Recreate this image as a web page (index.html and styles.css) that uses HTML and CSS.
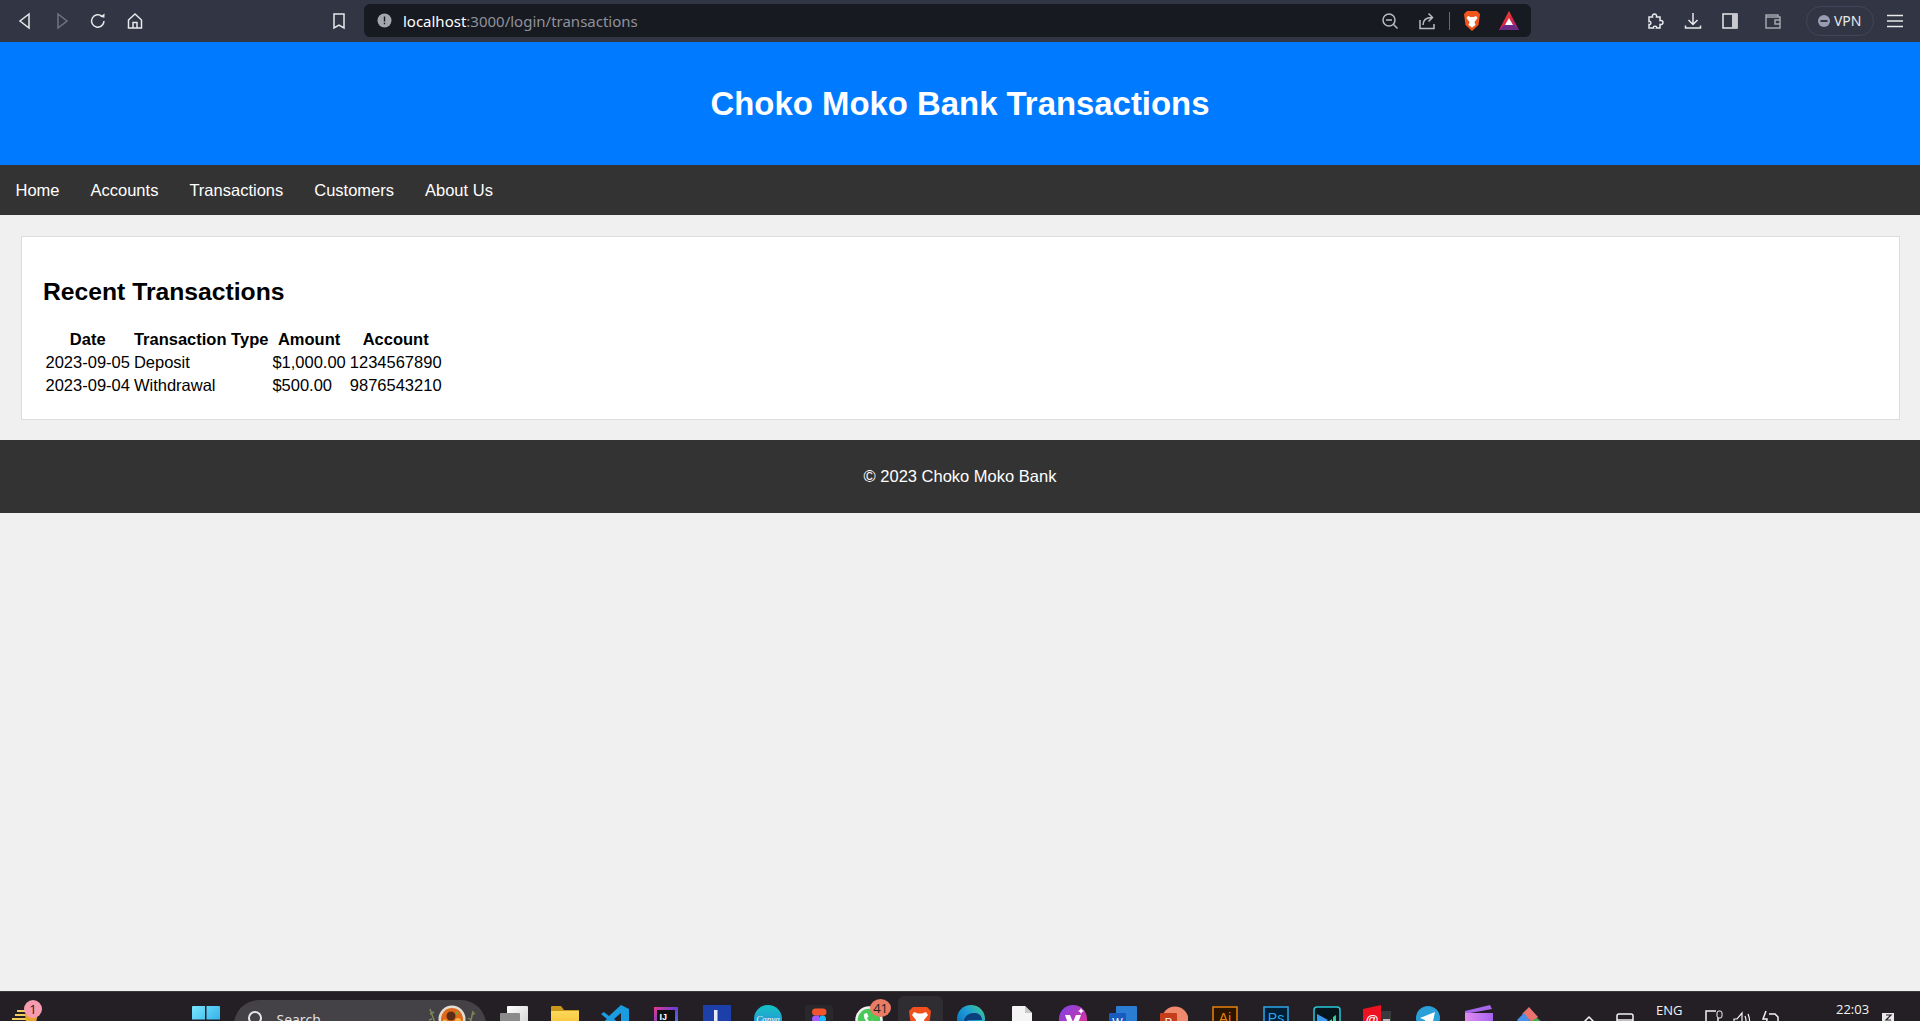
FILE: index.html
```html
<!DOCTYPE html>
<html lang="en">
<head>
<meta charset="utf-8">
<title>Choko Moko Bank Transactions</title>
<link rel="stylesheet" href="styles.css">
</head>
<body>
<svg class="defs" width="0" height="0" aria-hidden="true">
  <defs>
    <linearGradient id="g-win" x1="0" y1="0" x2="1" y2="1"><stop offset="0" stop-color="#78e6fc"/><stop offset="1" stop-color="#1f9fe6"/></linearGradient>
    <linearGradient id="g-folder" x1="0" y1="0" x2="0" y2="1"><stop offset="0" stop-color="#fdd85a"/><stop offset="1" stop-color="#f4b824"/></linearGradient>
    <linearGradient id="g-task" x1="0" y1="0" x2="1" y2="1"><stop offset="0" stop-color="#ffffff"/><stop offset="1" stop-color="#cfcfcf"/></linearGradient>
    <linearGradient id="g-ij" x1="0" y1="0" x2="1" y2="1"><stop offset="0" stop-color="#e8388a"/><stop offset=".5" stop-color="#6a3fd8"/><stop offset="1" stop-color="#2a9be8"/></linearGradient>
    <linearGradient id="g-canva" x1="0" y1="0" x2="0" y2="1"><stop offset="0" stop-color="#11c4c4"/><stop offset="1" stop-color="#3a7be0"/></linearGradient>
    <linearGradient id="g-edge" x1="0" y1="1" x2="1" y2="0"><stop offset="0" stop-color="#0b5fb0"/><stop offset=".55" stop-color="#1b9bd8"/><stop offset="1" stop-color="#45d08a"/></linearGradient>
    <linearGradient id="g-vy" x1="0" y1="0" x2="1" y2="1"><stop offset="0" stop-color="#7b45ea"/><stop offset="1" stop-color="#ee2f8c"/></linearGradient>
    <linearGradient id="g-clap" x1="0" y1="0" x2="1" y2="0"><stop offset="0" stop-color="#e28cf0"/><stop offset="1" stop-color="#a763ee"/></linearGradient>
    <linearGradient id="g-bat" x1="0" y1="0" x2="1" y2="1"><stop offset="0" stop-color="#f6701e"/><stop offset=".45" stop-color="#e6263f"/><stop offset="1" stop-color="#7a2a8c"/></linearGradient>
  </defs>
</svg>
<div class="page">
  <div class="toolbar">
    <div class="tool"><svg width="18" height="20" viewBox="0 0 18 20"><path class="ln" d="M13 3 4 10l9 7z"/></svg></div>
    <div class="tool dim"><svg width="18" height="20" viewBox="0 0 18 20"><path class="ln" d="M5 3l9 7-9 7z"/></svg></div>
    <div class="tool"><svg width="18" height="20" viewBox="0 0 18 20"><path class="ln" d="M15 10a6.200 6.200 0 1 1-2-4.600"/><path class="fl" d="M11 5.800l4.400 1 .2-4.400z"/></svg></div>
    <div class="tool"><svg width="18" height="20" viewBox="0 0 18 20"><path class="ln" d="M2.500 9 9 3l6.500 6v8h-13zM7 17v-5.500h4V17"/></svg></div>
    <div class="tool bookmark"><svg width="16" height="20" viewBox="0 0 16 20"><path class="ln" d="M3 3h10v14l-5-3-5 3z"/></svg></div>
    <div class="urlbar">
      <svg class="info" width="15" height="15" viewBox="0 0 15 15"><circle cx="7.500" cy="7.500" r="7" fill="#a5a7ae"/><path d="M6.800 3.500h1.400v5H6.800zM6.800 9.800h1.400v1.500H6.800z" fill="#181a21"/></svg>
      <span class="url"><span class="host">localhost</span>:3000/login/transactions</span>
      <div class="url-end">
        <svg class="end-ic" width="20" height="20" viewBox="0 0 20 20"><circle class="ln soft" cx="9" cy="9" r="6"/><path class="ln soft" d="M6 9h6M13.500 13.500l4 4"/></svg>
        <svg class="end-ic" width="20" height="20" viewBox="0 0 20 20"><path class="ln soft" d="M3 9v8.500h14V13M6 14c0-5 3-7.500 9-7.500M11.500 2.500l4 4-4 4"/></svg>
        <span class="divider"></span>
        <svg class="end-ic brave" width="18" height="22" viewBox="0 0 18 22"><path d="M4 1h10l3 3-1.500 11L9 21 2.500 15 1 4z" fill="#f1571d"/><path d="M5 6l2.500 1h3L13 6l1.500 2-3 4 1 3L9 17.500 5.500 15l1-3-3-4z" fill="#fff"/></svg>
        <svg class="end-ic tri" width="22" height="20" viewBox="0 0 22 20"><path d="M11 0 21 19H1z" fill="url(#g-bat)"/><path d="M1 19h20l-5-5H6z" fill="#6c2b87"/><path d="M11 7l4 7H7z" fill="#fff"/></svg>
      </div>
    </div>
    <div class="tool puzzle"><svg width="20" height="20" viewBox="0 0 20 20"><path class="ln" d="M3 6h3.500c-1-4 5-4 4 0H14v3.500c4-1 4 5 0 4V17h-3.500c1-2.500-4-2.500-3 0H3v-3.500c2.500 1 2.500-4 0-3z"/></svg></div>
    <div class="tool"><svg width="20" height="20" viewBox="0 0 20 20"><path class="ln" d="M10 2v11M5.500 9l4.500 4.500L14.500 9M2.500 14.500v2.500h15v-2.500"/></svg></div>
    <div class="tool"><svg width="20" height="20" viewBox="0 0 20 20"><rect class="ln" x="3" y="3" width="14" height="14"/><rect x="12" y="3" width="5" height="14" fill="#c9cad0"/></svg></div>
    <div class="tool wallet"><svg width="20" height="20" viewBox="0 0 20 20"><path class="ln dimln" d="M3 6V4h12v2M3 6h14v11H3zM17 9h-5v4h5"/></svg></div>
    <div class="vpn"><svg width="12" height="12" viewBox="0 0 12 12"><circle cx="6" cy="6" r="6" fill="#9a9cb4"/><rect x="2.500" y="5" width="7" height="2" fill="#323543"/></svg><span>VPN</span></div>
    <div class="tool burger"><svg width="18" height="16" viewBox="0 0 18 16"><path class="ln" d="M1 2.500h16M1 8h16M1 13.500h16"/></svg></div>
  </div>

  <header class="site-header"><h1>Choko Moko Bank Transactions</h1></header>
  <nav class="site-nav">
    <a href="#">Home</a><a href="#">Accounts</a><a href="#">Transactions</a><a href="#">Customers</a><a href="#">About Us</a>
  </nav>
  <main class="content">
    <section class="card">
      <h2>Recent Transactions</h2>
      <table>
        <thead><tr><th>Date</th><th>Transaction Type</th><th>Amount</th><th>Account</th></tr></thead>
        <tbody>
          <tr><td>2023-09-05</td><td>Deposit</td><td>$1,000.00</td><td>1234567890</td></tr>
          <tr><td>2023-09-04</td><td>Withdrawal</td><td>$500.00</td><td>9876543210</td></tr>
        </tbody>
      </table>
    </section>
  </main>
  <footer class="site-footer">© 2023 Choko Moko Bank</footer>
  <div class="spacer"></div>

  <div class="taskbar">
    <div class="weather"><svg width="28" height="30" viewBox="0 0 28 30"><path d="M5 19h8M3 23h11M0 27h14" stroke="#f0cc5e" stroke-width="2"/><path d="M13 22h13l-2 8H14z" fill="#e8a52c"/></svg><span class="badge pink">1</span></div>
    <div class="tb-icon win"><svg width="28" height="28" viewBox="0 0 28 28"><path d="M0 1a1 1 0 0 1 1-1h12v13.500H0zM14.500 0H27a1 1 0 0 1 1 1v12.500H14.500zM0 15h13.500v13H0zM14.500 15H28v13H14.500z" fill="url(#g-win)"/></svg></div>
    <div class="search">
      <svg width="20" height="20" viewBox="0 0 20 20"><circle cx="9" cy="9" r="6" fill="none" stroke="#e6e6e6" stroke-width="2"/><path d="M13 14l5 5" stroke="#e6e6e6" stroke-width="2"/></svg>
      <span class="search-text">Search</span>
      <svg class="food" width="50" height="30" viewBox="0 0 50 30"><path d="M3 4l5 14M3 9l4-2M5 14l-3 1M46 6l-3 14M45 10l3-2M44 15l-3-2" stroke="#7c8a52" stroke-width="1.500" fill="none"/><circle cx="25" cy="14" r="13.500" fill="#e4ddd2"/><circle cx="25" cy="14" r="11" fill="#e06a1c"/><circle cx="24" cy="11" r="4.500" fill="#5c2c16"/><circle cx="31" cy="16" r="3" fill="#f4b440"/><circle cx="18" cy="17" r="2.500" fill="#f4b440"/><circle cx="30" cy="8" r="1.500" fill="#6faa40"/></svg>
    </div>
    <div class="tb-icon"><svg width="28" height="28" viewBox="0 0 28 28"><rect x="7" width="21" height="24" rx="1" fill="url(#g-task)"/><rect y="7" width="20" height="21" rx="1" fill="#8b8b8b"/></svg></div>
    <div class="tb-icon"><svg width="28" height="28" viewBox="0 0 28 28"><path d="M0 1a1 1 0 0 1 1-1h9l3 4h15v24H0z" fill="#c9971a"/><path d="M0 5h28v23H0z" fill="url(#g-folder)"/></svg></div>
    <div class="tb-icon up"><svg width="28" height="28" viewBox="0 0 28 28"><path d="M20 0l8 4v20l-8 4L8 17l-5 4-3-2 6-5-6-5 3-2 5 4z" fill="#1c9ce0"/><path d="M20 8v12l-7-6z" fill="#231f25"/></svg></div>
    <div class="tb-icon down"><svg width="24" height="24" viewBox="0 0 24 24"><rect width="24" height="24" fill="url(#g-ij)"/><rect x="3" y="3" width="18" height="18" fill="#111"/><text class="ij" x="5.500" y="13">IJ</text></svg></div>
    <div class="tb-icon up"><svg width="28" height="28" viewBox="0 0 28 28"><rect width="28" height="28" fill="#1c3faa"/><rect x="11" y="5" width="3.500" height="18" fill="#e8ecf8"/></svg></div>
    <div class="tb-icon up"><svg width="28" height="28" viewBox="0 0 28 28"><circle cx="14" cy="14" r="14" fill="url(#g-canva)"/><text class="canva" x="14" y="17">Canva</text></svg></div>
    <div class="tb-icon figma"><svg width="28" height="28" viewBox="0 0 28 28"><rect width="28" height="28" rx="3" fill="#29282c"/><path d="M7 7a3.500 3.500 0 0 1 3.500-3.500H18a3.500 3.500 0 0 1 0 7h-7.500A3.500 3.500 0 0 1 7 7z" fill="#f2542d"/><path d="M7 14a3.500 3.500 0 0 1 3.500-3.500H14v7h-3.500A3.500 3.500 0 0 1 7 14z" fill="#a259ff"/><circle cx="17.500" cy="14" r="3.500" fill="#1abcfe"/></svg></div>
    <div class="tb-icon"><svg width="28" height="28" viewBox="0 0 28 28"><circle cx="14" cy="14" r="12.500" fill="#4ac959" stroke="#f0f0f0" stroke-width="2.500"/><path d="M9 8c-1 5 4 11 10 11l1.500-3-3.500-1.500-1.500 1.500c-2-1-3-2.500-3.500-4l1.500-1.500L12 7z" fill="#fff"/></svg><span class="badge coral">41</span></div>
    <div class="tb-icon active down"><svg width="24" height="28" viewBox="0 0 24 28"><path d="M5 0h14l4 4-2 16-9 8-9-8L1 4z" fill="#f1501d"/><path d="M6 5l4 1.500h4L18 5l2 3-4 5 1 4-5 3-5-3 1-4-4-5z" fill="#fff"/></svg></div>
    <div class="tb-icon up"><svg width="28" height="28" viewBox="0 0 28 28"><circle cx="14" cy="14" r="14" fill="url(#g-edge)"/><path d="M7 17c0-6 5-9 10-9s8 3 8 7H12c-3 0-4 3-2 6-2 0-3-2-3-4z" fill="#0a3f7c"/></svg></div>
    <div class="tb-icon"><svg width="20" height="28" viewBox="0 0 20 28"><path d="M0 1a1 1 0 0 1 1-1h12l7 7v21H0z" fill="#f4f4f4"/><path d="M13 0l7 7h-7z" fill="#c8c8c8"/></svg></div>
    <div class="tb-icon up"><svg width="28" height="28" viewBox="0 0 28 28"><circle cx="14" cy="14" r="14" fill="url(#g-vy)"/><path d="M6 10h5l3 7 3-7h5l-5 14h-6z" fill="#fff"/><path d="M22 3l1 2 2 1-2 1-1 2-1-2-2-1 2-1z" fill="#fff"/></svg></div>
    <div class="tb-icon"><svg width="28" height="28" viewBox="0 0 28 28"><rect x="7" width="21" height="28" rx="1" fill="#2b7cd3"/><rect y="7" width="17" height="17" rx="1" fill="#185abd"/><text class="ms" x="8.500" y="20">W</text></svg></div>
    <div class="tb-icon"><svg width="28" height="28" viewBox="0 0 28 28"><circle cx="15" cy="14" r="13.500" fill="#f08a6c"/><rect y="7" width="17" height="17" rx="1" fill="#c43e1c"/><text class="ms" x="8.500" y="20">P</text></svg></div>
    <div class="tb-icon"><svg width="26" height="26" viewBox="0 0 26 26"><rect x="1" y="1" width="24" height="24" fill="#2b1500" stroke="#e8820c" stroke-width="1.500"/><text class="adobe ai" x="13" y="17">Ai</text></svg></div>
    <div class="tb-icon"><svg width="26" height="26" viewBox="0 0 26 26"><rect x="1" y="1" width="24" height="24" fill="#001e36" stroke="#2da6e8" stroke-width="1.500"/><text class="adobe ps" x="13" y="17">Ps</text></svg></div>
    <div class="tb-icon"><svg width="28" height="28" viewBox="0 0 28 28"><rect x="1" y="1" width="26" height="26" rx="3" fill="#06161c" stroke="#27c7d8" stroke-width="1.500"/><path d="M4 8l11 6-11 8z" fill="#3a9bf0"/><path d="M16 15l3-2v9h-3zM20 11l3-2v13h-3z" fill="#2fd29a"/></svg></div>
    <div class="tb-icon up"><svg width="28" height="28" viewBox="0 0 28 28"><rect x="17" y="6" width="11" height="22" fill="#3a3a3c"/><rect x="20" y="14" width="7" height="3" fill="#bbb"/><path d="M0 4l18-4v28H0z" fill="#ee1122"/><text class="at" x="9" y="19">@</text></svg></div>
    <div class="tb-icon"><svg width="24" height="28" viewBox="0 0 24 28"><circle cx="12" cy="12" r="12" fill="#2a9fd8"/><path d="M4 12l15-6-3 14-4-4-2 3-1-5z" fill="#fff"/></svg></div>
    <div class="tb-icon up"><svg width="28" height="28" viewBox="0 0 28 28"><path d="M0 6l25-6 2 4L0 9z" fill="#a667ea"/><rect y="8" width="28" height="20" fill="url(#g-clap)"/></svg></div>
    <div class="tb-icon up"><svg width="28" height="28" viewBox="0 0 28 28"><path d="M14 4l13 13-9 9H9L1 17z" fill="#2b2b30"/><path d="M6 9l7-7 9 10-6 5z" fill="#e9716e"/><path d="M1 15l7-7 7 9-6 6z" fill="#4a8fe8"/><path d="M15 16l6-3 6 5-6 7z" fill="#4aa84e"/></svg></div>
    <div class="tray">
      <svg class="tray-chev" width="16" height="12" viewBox="0 0 16 12"><path d="M2 8l6-6 6 6" fill="none" stroke="#f2f2f2" stroke-width="1.500"/></svg>
      <svg class="tray-rect" width="18" height="18" viewBox="0 0 18 18"><rect x="1" y="1" width="16" height="14" rx="2" fill="none" stroke="#f2f2f2" stroke-width="1.500"/><path d="M1 7h16" stroke="#f2f2f2" stroke-width="1.500"/></svg>
      <span class="eng">ENG</span>
      <svg class="tray-a" width="18" height="20" viewBox="0 0 18 20"><path d="M11 1H1v18M13 8v11" fill="none" stroke="#f2f2f2" stroke-width="1.500"/><rect x="12" y="1" width="5" height="7" rx="2" fill="none" stroke="#f2f2f2"/></svg>
      <svg class="tray-b" width="20" height="20" viewBox="0 0 20 20"><path d="M1 8v8h3l5-6V2L4 8zM12 5q2 5 0 10M15 3q3 7 0 14" fill="none" stroke="#f2f2f2" stroke-width="1.200"/></svg>
      <svg class="tray-c" width="18" height="20" viewBox="0 0 18 20"><path d="M5 1 2 9h4l-1 9M8 4h6l3 3v13H8" fill="none" stroke="#f2f2f2" stroke-width="1.500"/></svg>
      <span class="clock">22:03</span>
      <svg class="tray-d" width="16" height="20" viewBox="0 0 16 20"><path d="M1 3h12v9l-3 0-2 5-1-5H1z" fill="#e8e8e8"/><path d="M5 5h5l-5 5h5" fill="none" stroke="#231f25" stroke-width="1.200"/></svg>
    </div>
  </div>
</div>
</body>
</html>
```
FILE: styles.css
```css
* { box-sizing: border-box; }
html, body { margin: 0; height: 100%; overflow: hidden; }
body { background: #f0f0f0; font-family: "Liberation Sans", Arial, sans-serif; font-size: 16.5px; color: #000; }
.defs { position: absolute; }
.page { height: 100vh; display: flex; flex-direction: column; }

.toolbar { flex: 0 0 42px; background: #323543; display: flex; align-items: center; padding: 0 0 1px 6.500px; }
.tool { flex: 0 0 36.700px; height: 30px; display: flex; align-items: center; justify-content: center; }
.tool.dim { opacity: .35; }
.ln { fill: none; stroke: #e8e9ec; stroke-width: 1.500; }
.fl { fill: #e8e9ec; }
.soft { stroke: #b9bbc2; }
.dimln { stroke: #a5a7ae; }
.bookmark { margin-left: 167px; }
.urlbar { flex: 0 0 1167px; margin-left: 7px; height: 33px; background: #181a21; border-radius: 6px; display: flex; align-items: center; padding-left: 13px; font-family: "Noto Sans", sans-serif; font-size: 15px; color: #8f929b; }
.url { margin-left: 11px; white-space: nowrap; }
.host { color: #fff; }
.url-end { margin-left: auto; display: flex; align-items: center; padding-right: 11px; }
.end-ic { margin-left: 17px; }
.end-ic.brave { margin-left: 18px; }
.end-ic.tri { margin-left: 17px; }
.divider { width: 1px; height: 18px; background: #666a74; margin-left: 12px; margin-right: -5px; }
.puzzle { margin-left: 107px; }
.wallet { margin-left: 7px; }
.vpn { margin-left: 14px; flex: 0 0 68px; height: 30px; border: 1px solid #43465a; border-radius: 15px; display: flex; align-items: center; justify-content: center; gap: 4px; font-family: "Noto Sans", sans-serif; font-size: 14px; color: #e8e9ec; }
.burger { flex-basis: 34px; margin-left: 4px; }

.site-header { background: #007bff; color: #fff; text-align: center; padding: 20.500px; }
.site-header h1 { margin: 22px 0; font-size: 32.900px; line-height: 38px; }
.site-nav { background: #333; padding: 16px 15.500px; display: flex; gap: 31px; }
.site-nav a { color: #fff; text-decoration: none; line-height: 18px; }
.content { padding: 21px 20px 20px 21px; }
.card { background: #fff; border: 1px solid #ddd; padding: 21px; }
.card h2 { margin: 20px 0 21px; font-size: 24.700px; line-height: 28px; }
table { border-spacing: 2px; margin-left: -0.500px; }
th, td { padding: 1px; line-height: 19px; }
td { text-align: left; }
.site-footer { background: #333; color: #fff; text-align: center; padding: 27px 0 28px; line-height: 18px; }
.spacer { flex: 1; }

.taskbar { flex: 0 0 30px; height: 30px; overflow: hidden; background: #231f25; border-top: 1px solid #3a383c; display: flex; position: relative; padding-left: 180.500px; }
.weather { position: absolute; left: 12px; top: 0; }
.tb-icon { flex: 0 0 50.800px; padding-top: 14px; display: flex; justify-content: center; align-items: flex-start; position: relative; height: 60px; }
.tb-icon.up { padding-top: 13px; }
.tb-icon.down { padding-top: 15px; }
.tb-icon.figma { padding-top: 13px; }
.tb-icon.active::before { content: ""; position: absolute; left: 3px; right: 3px; top: 4px; height: 60px; background: #2f2c32; border-radius: 6px; }
.tb-icon.active svg { position: relative; }
.win { flex-basis: 51px; }
.search { flex: 0 0 252px; margin: 8px 3px 0 2px; height: 50px; background: #444247; border-radius: 25px; display: flex; align-items: flex-start; padding: 9px 0 0 12px; position: relative; color: #e6e6e6; font-family: "Open Sans", sans-serif; font-size: 14px; }
.search-text { margin-left: 11px; margin-top: 1px; }
.food { margin-left: auto; margin-top: -4px; margin-right: 9px; }
.badge { position: absolute; display: flex; align-items: center; justify-content: center; border-radius: 50%; color: #222; font-family: "Open Sans", sans-serif; font-size: 13px; }
.badge.pink { left: 12px; top: 8px; width: 18px; height: 18px; background: #f79cb0; }
.badge.coral { left: 26px; top: 7px; width: 21px; height: 18px; background: #ea7c64; }
.ij { font-family: "Liberation Sans", sans-serif; font-weight: 700; font-size: 9px; fill: #fff; }
.canva { font-family: "Liberation Serif", serif; font-style: italic; font-size: 9px; fill: #fff; text-anchor: middle; }
.ms { font-family: "Liberation Sans", sans-serif; font-size: 11px; fill: #fff; text-anchor: middle; }
.adobe { font-family: "Liberation Sans", sans-serif; font-size: 14px; text-anchor: middle; }
.adobe.ai { fill: #e8820c; }
.adobe.ps { fill: #2da6e8; }
.at { font-family: "Liberation Sans", sans-serif; font-size: 13px; font-weight: 700; fill: #fff; text-anchor: middle; }
.tray { position: absolute; left: 0; right: 0; top: 0; height: 30px; pointer-events: none; color: #f2f2f2; font-family: "Open Sans", sans-serif; font-size: 13px; }
.tray svg, .tray span { position: absolute; }
.tray-chev { left: 1581px; top: 23px; }
.tray-rect { left: 1616px; top: 21px; }
.eng { left: 1656px; top: 9px; }
.tray-a { left: 1705px; top: 18px; }
.tray-b { left: 1733px; top: 19px; }
.tray-c { left: 1761px; top: 18px; }
.clock { left: 1836px; top: 8px; }
.tray-d { left: 1881px; top: 18px; }
```
